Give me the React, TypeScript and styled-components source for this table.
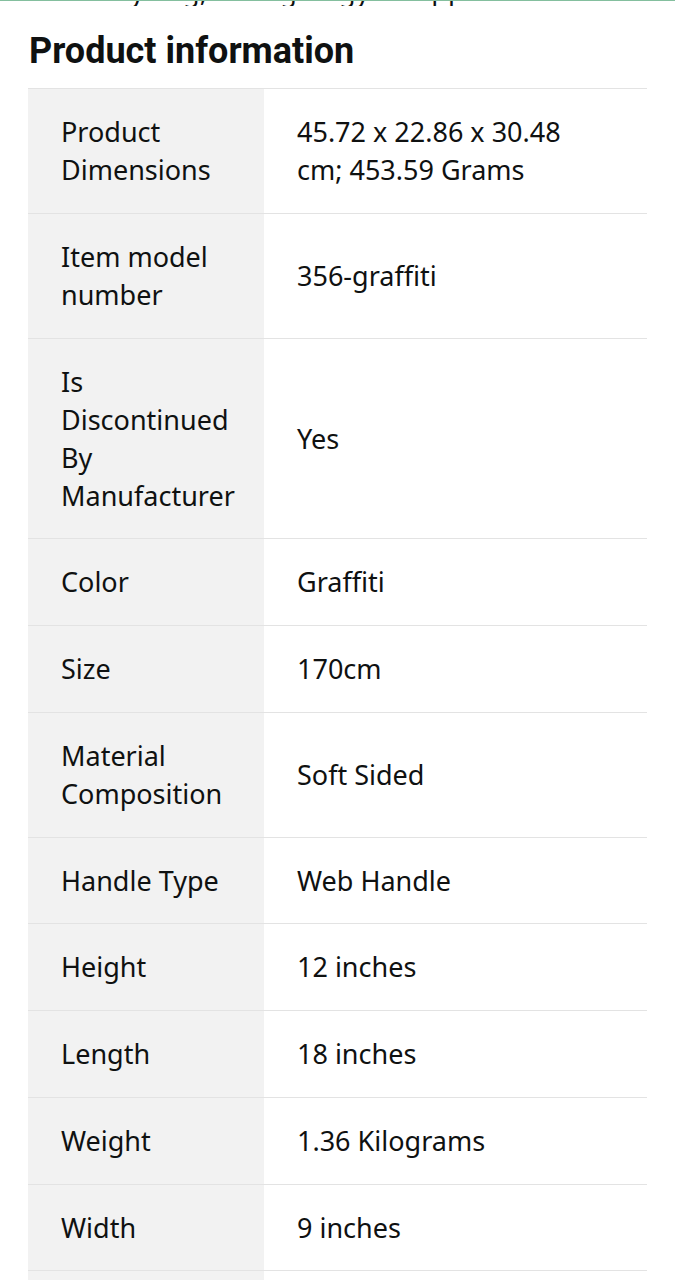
import React from "react";
import styled, { createGlobalStyle } from "styled-components";

const GlobalStyle = createGlobalStyle`
  html, body { margin: 0; padding: 0; background: #ffffff; }
  body { font-family: "Noto Sans", "Open Sans", sans-serif; color: #0f1111; }
`;

const Page = styled.div`
  width: 675px;
  border-top: 1px solid #84bf9e;
  box-sizing: border-box;
`;

const CutLine = styled.div`
  height: 5px;
  overflow: hidden;
  display: flex;
  align-items: flex-end;
  padding-left: 64px;
`;

const CutText = styled.div`
  font-size: 27px;
  line-height: 30px;
  white-space: nowrap;
  color: #0f1111;
`;

const Section = styled.section`
  padding: 24px 28px 0 28px;
`;

const Heading = styled.h2`
  margin: 0 0 16px 1px;
  font-family: Roboto, "Noto Sans", sans-serif;
  font-weight: 700;
  font-size: 36px;
  line-height: 42px;
  color: #0f1111;
`;

const Table = styled.div`
  display: grid;
  grid-template-columns: 236px 1fr;
  border-top: 1px solid #e3e3e3;
`;

const Cell = styled.div<{ $label?: boolean }>`
  background: ${(p) => (p.$label ? "#f2f2f2" : "#ffffff")};
  border-bottom: 1px solid #e3e3e3;
  padding: 24px ${(p) => (p.$label ? "30px" : "50px")} 23.75px 33px;
  font-size: 27px;
  line-height: 38px;
  color: #0f1111;
  display: flex;
  align-items: center;
`;

const rows: [string, string][] = [
  ["Product Dimensions", "45.72 x 22.86 x 30.48 cm; 453.59 Grams"],
  ["Item model number", "356-graffiti"],
  ["Is Discontinued By Manufacturer", "Yes"],
  ["Color", "Graffiti"],
  ["Size", "170cm"],
  ["Material Composition", "Soft Sided"],
  ["Handle Type", "Web Handle"],
  ["Height", "12 inches"],
  ["Length", "18 inches"],
  ["Weight", "1.36 Kilograms"],
  ["Width", "9 inches"],
  ["Manufacturer", "Generic"],
];

export default function App() {
  return (
    <>
      <GlobalStyle />
      <Page>
        <CutLine>
          <CutText>sturdy bag, strong as gym supplies</CutText>
        </CutLine>
        <Section>
          <Heading>Product information</Heading>
          <Table>
            {rows.map(([k, v]) => (
              <React.Fragment key={k}>
                <Cell $label>{k}</Cell>
                <Cell>{v}</Cell>
              </React.Fragment>
            ))}
          </Table>
        </Section>
      </Page>
    </>
  );
}
